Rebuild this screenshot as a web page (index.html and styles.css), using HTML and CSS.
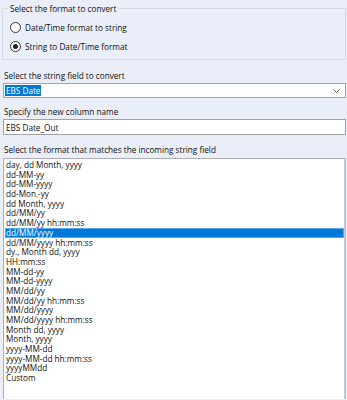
FILE: index.html
```html
<!DOCTYPE html>
<html lang="en">
<head>
  <meta charset="UTF-8">
  <title>DateTime - Configuration</title>
  <link rel="stylesheet" href="styles.css">
</head>
<body>

  <fieldset class="groupe">
    <legend>Select the format to convert</legend>
    <div class="choix"><span class="radio"></span>Date/Time format to string</div>
    <div class="choix"><span class="radio coche"></span>String to Date/Time format</div>
  </fieldset>

  <div class="libelle libelle-1">Select the string field to convert</div>
  <div class="combo">
    <span class="selection">EBS Date</span>
    <svg class="chevron" width="7" height="4" viewBox="0 0 7 4"><path d="M0.5 0.5 L3.5 3.5 L6.5 0.5" fill="none" stroke="#555" stroke-width="1"/></svg>
  </div>

  <div class="libelle libelle-2">Specify the new column name</div>
  <div class="saisie">EBS Date_Out</div>

  <div class="libelle libelle-3">Select the format that matches the incoming string field</div>
  <ul class="liste">
    <li>day, dd Month, yyyy</li>
    <li>dd-MM-yy</li>
    <li>dd-MM-yyyy</li>
    <li>dd-Mon.-yy</li>
    <li>dd Month, yyyy</li>
    <li>dd/MM/yy</li>
    <li>dd/MM/yy hh:mm:ss</li>
    <li class="actif">dd/MM/yyyy</li>
    <li>dd/MM/yyyy hh:mm:ss</li>
    <li>dy., Month dd, yyyy</li>
    <li>HH:mm:ss</li>
    <li>MM-dd-yy</li>
    <li>MM-dd-yyyy</li>
    <li>MM/dd/yy</li>
    <li>MM/dd/yy hh:mm:ss</li>
    <li>MM/dd/yyyy</li>
    <li>MM/dd/yyyy hh:mm:ss</li>
    <li>Month dd, yyyy</li>
    <li>Month, yyyy</li>
    <li>yyyy-MM-dd</li>
    <li>yyyy-MM-dd hh:mm:ss</li>
    <li>yyyyMMdd</li>
    <li>Custom</li>
  </ul>

</body>
</html>
```

FILE: styles.css
```css
body {
  background: #eaeef8;
  font-family: "Open Sans", "Noto Sans", sans-serif;
  font-size: 8.2px;
  line-height: 11px;
  color: #111;
  margin: 0;
  padding: 2.5px 1px 0 3px;
  height: 400px;
  box-sizing: border-box;
  overflow: hidden;
}

.groupe {
  margin: 0 0 0 -1px;
  border: 1px solid #d6dae3;
  padding: 4px 8px 2px 7px;
}

.groupe legend {
  padding: 0 2px;
  margin-left: -2px;
}

.choix {
  display: flex;
  align-items: center;
  gap: 4px;
  height: 19.5px;
}

.radio {
  width: 9px;
  height: 9px;
  border: 1px solid #333;
  border-radius: 50%;
  background: #fff;
  display: flex;
  align-items: center;
  justify-content: center;
}

.coche::after {
  content: "";
  width: 5px;
  height: 5px;
  border-radius: 50%;
  background: #222;
}

.libelle { padding-left: 1px; }
.libelle-1 { margin-top: 10px; }
.libelle-2 { margin-top: 7.5px; }
.libelle-3 { margin-top: 8.5px; }

.combo, .saisie {
  height: 15px;
  background: #fff;
  border: 1px solid #a2a2a2;
  box-sizing: border-box;
  margin-top: 2.5px;
  display: flex;
  align-items: center;
  padding: 0 5px 0 1px;
}

.selection {
  background: #0078d7;
  color: #fff;
  padding: 0 1px;
  line-height: 11px;
}

.chevron { margin-left: auto; }

.saisie { padding-left: 2px; height: 16px; }

.liste {
  list-style: none;
  margin: 3.5px 0 0 0;
  padding: 1px 0 0 1px;
  background: #fff;
  border: 1px solid #abadb3;
  border-right: 2px solid #c3c6ce;
  border-bottom: 0;
  height: 241px;
  box-sizing: border-box;
}

.liste li {
  line-height: 9.7px;
  height: 9.7px;
  padding-left: 1px;
  box-sizing: border-box;
}

.liste .actif {
  background: #0078d7;
  color: #fff;
  box-shadow: inset 0 0 0 1px #5aa6ea;
}
```
